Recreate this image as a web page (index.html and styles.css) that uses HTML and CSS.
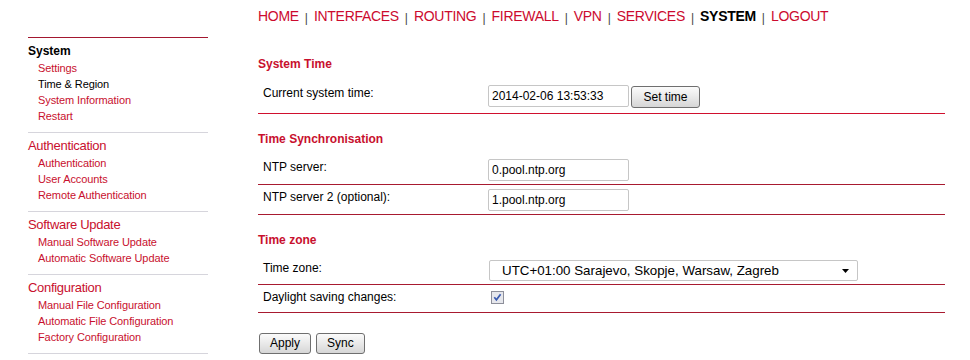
FILE: index.html
```html
<!DOCTYPE html>
<html lang="en">
<head>
<meta charset="utf-8">
<title>System - Time &amp; Region</title>
<link rel="stylesheet" href="styles.css">
</head>
<body>
<nav class="topnav">
  <a class="nav-link" href="#">HOME</a><span class="sep">|</span><a class="nav-link" href="#">INTERFACES</a><span class="sep">|</span><a class="nav-link" href="#">ROUTING</a><span class="sep">|</span><a class="nav-link" href="#">FIREWALL</a><span class="sep">|</span><a class="nav-link" href="#">VPN</a><span class="sep">|</span><a class="nav-link" href="#">SERVICES</a><span class="sep">|</span><a class="nav-link nav-link--active" href="#">SYSTEM</a><span class="sep">|</span><a class="nav-link" href="#">LOGOUT</a>
</nav>
<div class="layout">
  <aside class="sidebar">
    <section class="side-sec side-sec--first">
      <h2 class="side-title side-title--current">System</h2>
      <ul class="side-list">
        <li><a class="side-link" href="#">Settings</a></li>
        <li><span class="side-link side-link--active">Time &amp; Region</span></li>
        <li><a class="side-link" href="#">System Information</a></li>
        <li><a class="side-link" href="#">Restart</a></li>
      </ul>
    </section>
    <section class="side-sec">
      <h2 class="side-title">Authentication</h2>
      <ul class="side-list">
        <li><a class="side-link" href="#">Authentication</a></li>
        <li><a class="side-link" href="#">User Accounts</a></li>
        <li><a class="side-link" href="#">Remote Authentication</a></li>
      </ul>
    </section>
    <section class="side-sec">
      <h2 class="side-title">Software Update</h2>
      <ul class="side-list">
        <li><a class="side-link" href="#">Manual Software Update</a></li>
        <li><a class="side-link" href="#">Automatic Software Update</a></li>
      </ul>
    </section>
    <section class="side-sec">
      <h2 class="side-title">Configuration</h2>
      <ul class="side-list">
        <li><a class="side-link" href="#">Manual File Configuration</a></li>
        <li><a class="side-link" href="#">Automatic File Configuration</a></li>
        <li><a class="side-link" href="#">Factory Configuration</a></li>
      </ul>
    </section>
    <div class="side-end"></div>
  </aside>
  <main class="content">
    <section class="form-sec form-sec--first">
      <h3 class="sec-title">System Time</h3>
      <div class="form-row form-row--bright">
        <label class="form-label">Current system time:</label>
        <div class="form-field">
          <input class="text-input" type="text" value="2014-02-06 13:53:33">
          <button class="btn btn--inline" type="button">Set time</button>
        </div>
      </div>
    </section>
    <section class="form-sec">
      <h3 class="sec-title">Time Synchronisation</h3>
      <div class="form-row">
        <label class="form-label">NTP server:</label>
        <div class="form-field"><input class="text-input" type="text" value="0.pool.ntp.org"></div>
      </div>
      <div class="form-row">
        <label class="form-label">NTP server 2 (optional):</label>
        <div class="form-field"><input class="text-input" type="text" value="1.pool.ntp.org"></div>
      </div>
    </section>
    <section class="form-sec">
      <h3 class="sec-title">Time zone</h3>
      <div class="form-row">
        <label class="form-label">Time zone:</label>
        <div class="form-field">
          <div class="select-wrap">
            <select class="select">
              <option>UTC+01:00 Sarajevo, Skopje, Warsaw, Zagreb</option>
            </select>
            <svg class="select-arrow" width="7" height="4" viewBox="0 0 7 4"><path d="M0 0H7L3.5 4Z" fill="#000"/></svg>
          </div>
        </div>
      </div>
      <div class="form-row">
        <label class="form-label">Daylight saving changes:</label>
        <div class="form-field form-field--check">
          <svg class="checkbox" width="13" height="13" viewBox="0 0 13 13"><rect x="0.5" y="0.5" width="12" height="12" fill="#e6e7ec" stroke="#8d8f9a"/><path d="M3.3 6.3L5.4 8.8L9.6 3.2" fill="none" stroke="#3a5bb0" stroke-width="1.7"/></svg>
        </div>
      </div>
    </section>
    <div class="actions">
      <button class="btn" type="button">Apply</button>
      <button class="btn" type="button">Sync</button>
    </div>
  </main>
</div>
</body>
</html>
```
FILE: styles.css
```css
* { box-sizing: border-box; }
html, body { margin: 0; padding: 0; background: #fff; }
body {
  font-family: "Liberation Sans", Arial, sans-serif;
  color: #000;
  width: 970px;
  height: 360px;
  overflow: hidden;
}

/* top navigation */
.topnav {
  padding: 8px 0 0 258px;
  height: 24px;
  font-size: 14px;
  line-height: 16px;
  white-space: nowrap;
  letter-spacing: -0.3px;
}
.nav-link { color: #cc0a2e; text-decoration: none; }
.nav-link--active { color: #000; font-weight: bold; }
.sep {
  display: inline-block;
  font-size: 12px;
  color: #444;
  margin: 0 6px;
  letter-spacing: 0;
  vertical-align: -1px;
}

.layout {
  display: flex;
  margin-top: 13px;
}

/* sidebar */
.sidebar {
  margin-left: 28px;
  width: 180px;
  flex: none;
}
.side-sec {
  border-top: 1px solid #d6d5dc;
  padding: 5px 0 8px;
}
.side-sec--first {
  border-top-color: #a3172f;
  padding-top: 6px;
}
.side-title {
  margin: 0 0 1px;
  font-size: 13px;
  line-height: 16px;
  font-weight: normal;
  color: #c8102e;
  letter-spacing: -0.3px;
}
.side-title--current {
  font-size: 12px;
  line-height: 14px;
  font-weight: bold;
  color: #000;
  letter-spacing: 0;
  margin-bottom: 2px;
}
.side-list { list-style: none; margin: 0; padding: 0 0 0 10px; }
.side-list li { font-size: 11px; line-height: 16px; letter-spacing: -0.1px; }
.side-link { color: #c8102e; text-decoration: none; }
.side-link--active { color: #000; }
.side-end { border-top: 1px solid #d6d5dc; }

/* main content */
.content {
  margin-left: 50px;
  width: 687px;
  padding-top: 20px;
}
.form-sec { margin-top: 18px; }
.form-sec--first { margin-top: 0; }
.sec-title {
  margin: 0 0 9px;
  font-size: 12px;
  line-height: 14px;
  font-weight: bold;
  color: #c8102e;
}
.form-sec--first .sec-title { margin-bottom: 10px; }
.form-row {
  display: flex;
  align-items: flex-start;
  padding: 4px 0 3px;
  border-bottom: 1px solid #a81a30;
}
.form-row--bright { border-bottom-color: #d0102e; }
.form-label {
  width: 230px;
  flex: none;
  padding-left: 5px;
  margin-top: 1px;
  font-size: 12px;
  line-height: 14px;
}
.form-field { display: flex; align-items: flex-start; }
.form-field--check { height: 20px; padding-top: 2px; padding-left: 3px; }
.checkbox { display: block; }

.text-input {
  width: 141px;
  height: 22px;
  border: 1px solid #c6c6c6;
  border-radius: 2px;
  padding: 0 3px;
  font-family: "Liberation Sans", Arial, sans-serif;
  font-size: 12px;
  color: #000;
  background: #fff;
  outline: none;
}

.btn {
  height: 21px;
  padding: 0 10px;
  border: 1px solid #6f6f6f;
  border-radius: 3px;
  background: linear-gradient(#fbfbfb, #e9e9e9 50%, #d6d6d6);
  font-family: "Liberation Sans", Arial, sans-serif;
  font-size: 12px;
  line-height: 19px;
  color: #000;
}
.btn--inline {
  height: 22px;
  width: 69px;
  padding: 0;
  margin: 1px 0 2px 2px;
}

.select-wrap { position: relative; width: 369px; height: 21px; margin-left: 1px; }
.select {
  appearance: none;
  -webkit-appearance: none;
  width: 369px;
  height: 21px;
  border: 1px solid #c6c6c6;
  border-radius: 2px;
  padding: 0 0 0 12px;
  background: #fff;
  font-family: "Liberation Sans", Arial, sans-serif;
  font-size: 13.33px;
  color: #000;
  outline: none;
}
.select-arrow {
  position: absolute;
  right: 9px;
  top: 9px;
}

.actions {
  display: flex;
  gap: 5px;
  margin-top: 20px;
  padding-left: 1px;
}
```
